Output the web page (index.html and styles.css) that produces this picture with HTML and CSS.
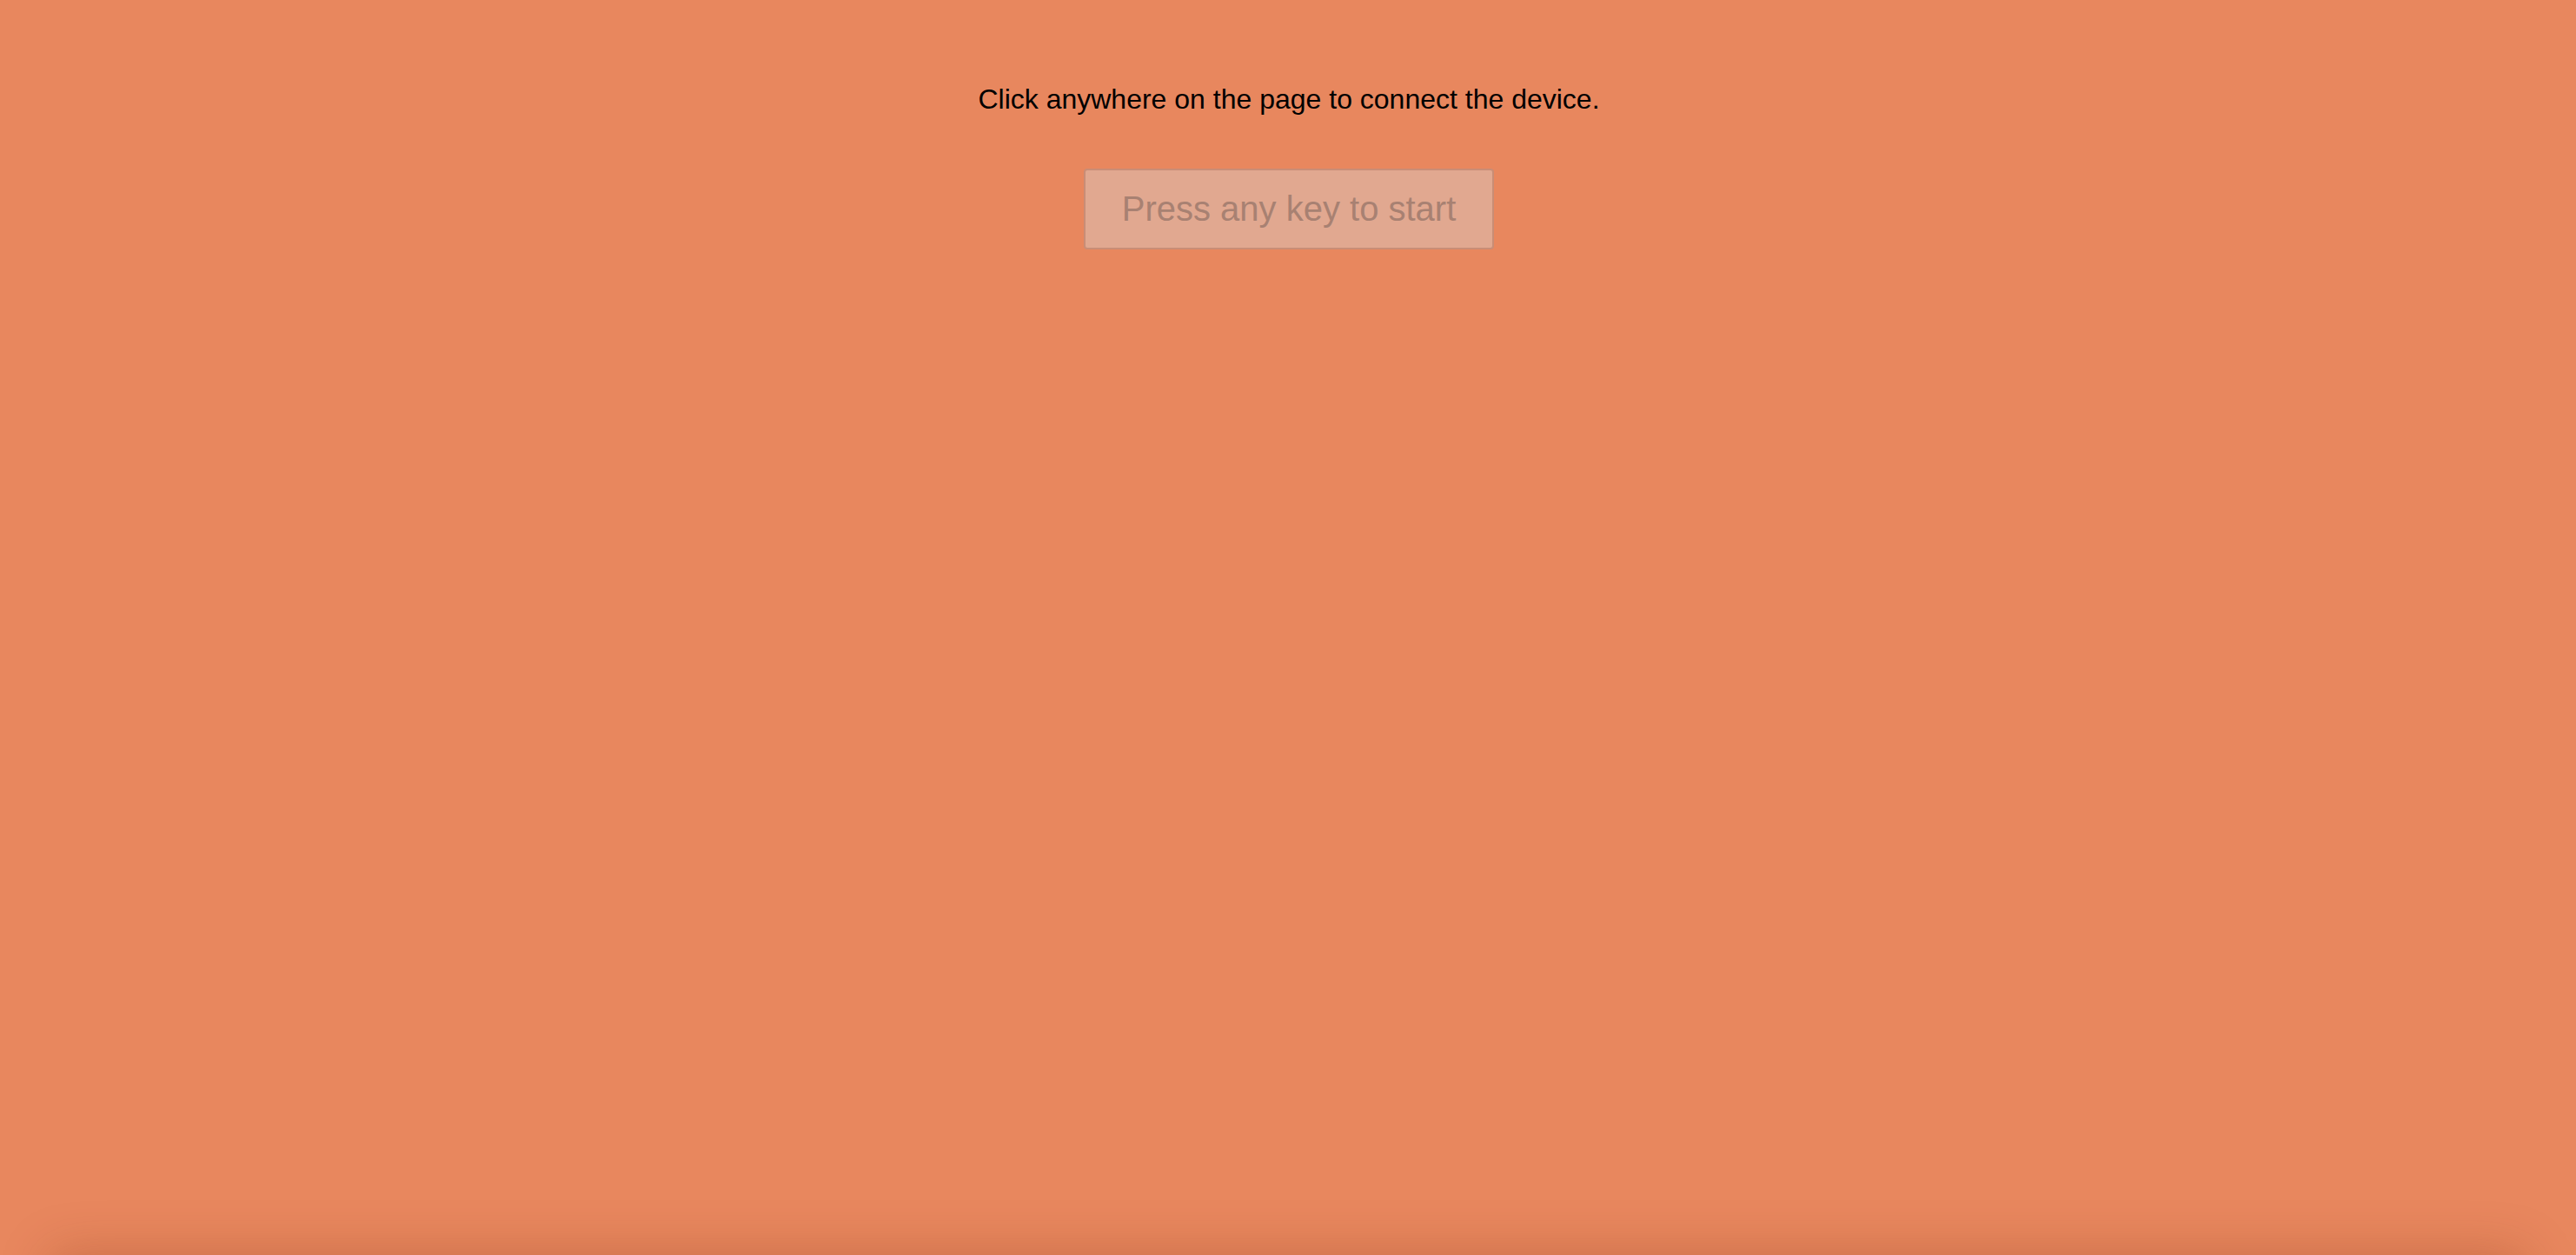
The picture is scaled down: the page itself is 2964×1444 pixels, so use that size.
FILE: index.html
```html
<!DOCTYPE html>
<html lang="en">
<head>
<meta charset="utf-8">
<title>Connect device</title>
<link rel="stylesheet" href="styles.css">
</head>
<body>
<main class="page">
  <p class="hint">Click anywhere on the page to connect the device.</p>
  <button class="start-btn" disabled>Press any key to start</button>
</main>
<div class="shade-wrap"><div class="bottom-shade"></div></div>
</body>
</html>
```
FILE: styles.css
```css
html, body {
  margin: 0;
  padding: 0;
  height: 100%;
  overflow: hidden;
}
body {
  background: #e8875e;
  font-family: "Liberation Sans", Arial, sans-serif;
  position: relative;
}
.page {
  display: flex;
  flex-direction: column;
  align-items: center;
  padding-top: 96px;
  padding-left: 2px;
}
.hint {
  margin: 0;
  font-size: 32px;
  color: #000;
}
.start-btn {
  margin-top: 61px;
  font-family: "Liberation Sans", Arial, sans-serif;
  font-size: 40px;
  line-height: 47px;
  padding: 21px 42px;
  background: #e1a890;
  color: #a88172;
  border: 2px solid #c98d76;
  border-radius: 4px;
}
.shade-wrap {
  position: absolute;
  left: 0;
  right: 0;
  bottom: 0;
  height: 120px;
  overflow: hidden;
  pointer-events: none;
}
.bottom-shade {
  position: absolute;
  left: 60px;
  right: 60px;
  top: 100%;
  height: 120px;
  box-shadow: 0 0 60px rgba(120, 40, 10, 0.28);
}
```
